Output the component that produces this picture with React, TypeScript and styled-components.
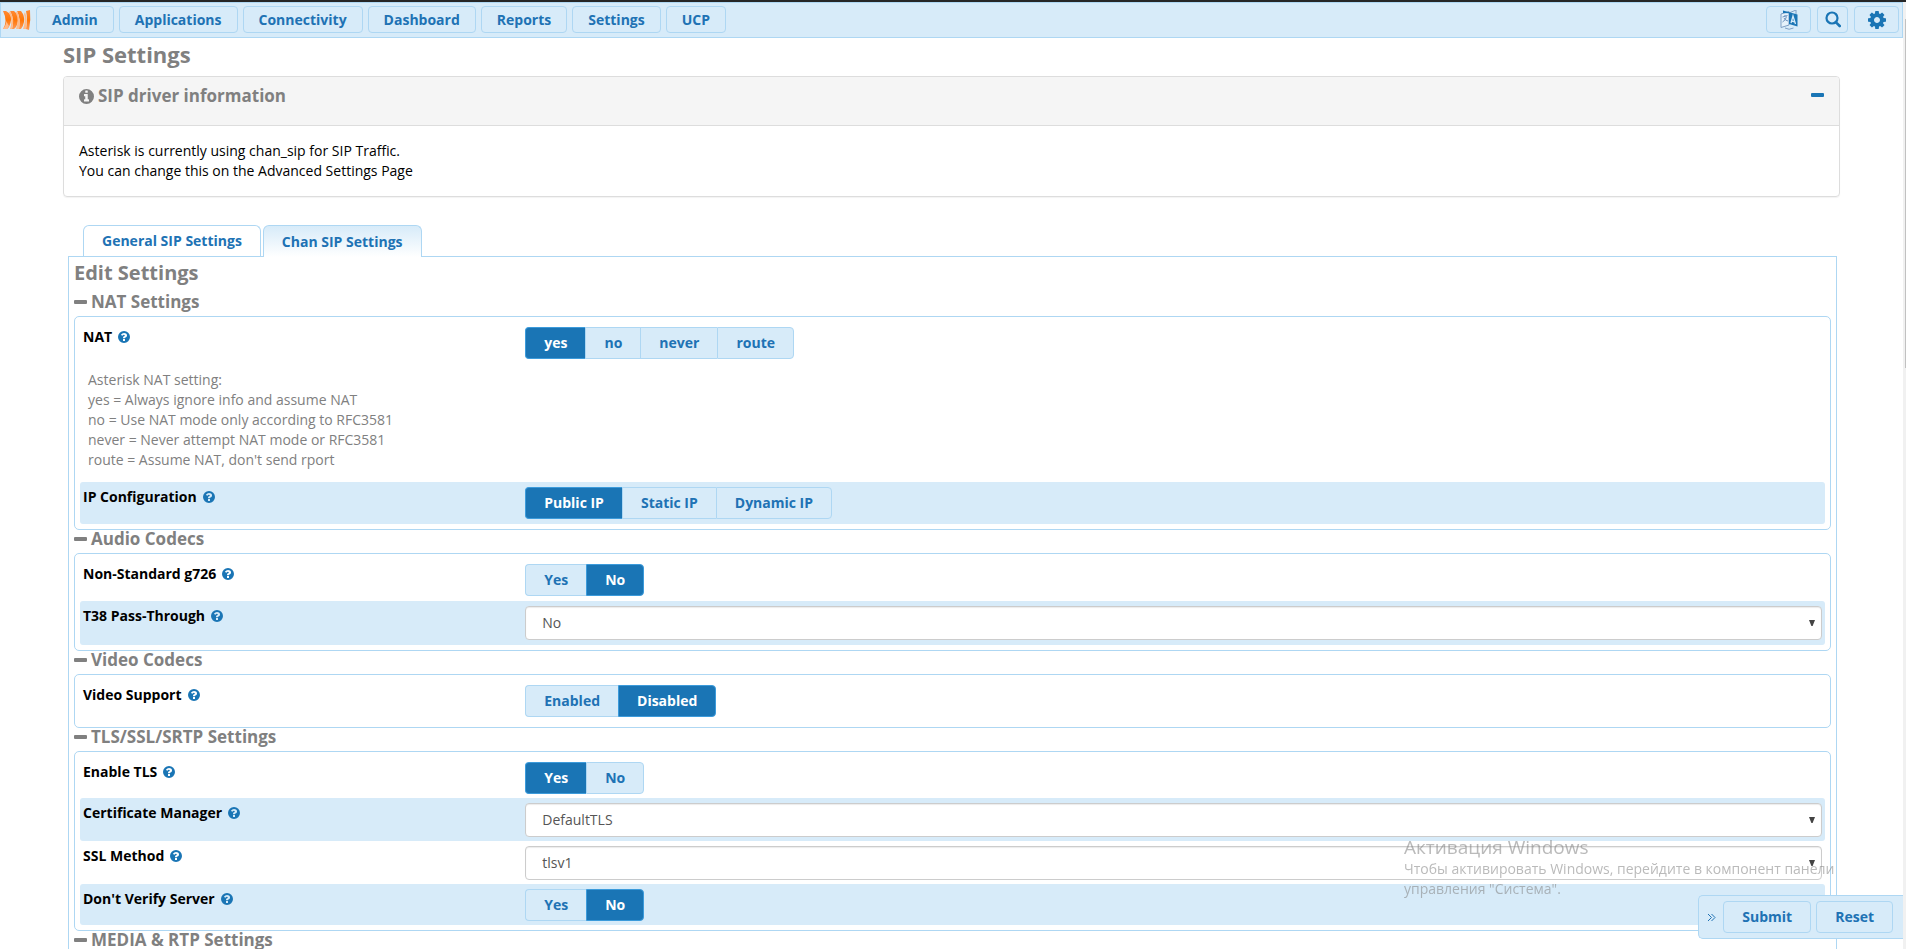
import React, { useId, useState } from "react";
import styled, { createGlobalStyle } from "styled-components";

const GlobalStyle = createGlobalStyle`
  *, *::before, *::after { box-sizing: border-box; }
  html, body { margin: 0; padding: 0; }
  html { overflow: hidden; height: 100%; }
  body {
    height: 100%;
    overflow: hidden;
    background: #fff;
    color: #000;
    font: 14px/20px "Open Sans", "Noto Sans", sans-serif;
  }
  button, select { font: inherit; margin: 0; }
  h1, h2, h3, p { margin: 0; }
`;

const Page = styled.div`
  border-top: 2px solid #262626;
  padding-right: 3px;
`;

const TopBar = styled.header`
  display: flex;
  justify-content: space-between;
  height: 36px;
  padding: 3px 3px 4px 1px;
  background: #d7ebf9;
  border: 1px solid #aed7f3;
`;

const NavGroup = styled.nav`
  display: flex;
  align-items: center;
  gap: 5px;
`;

const ToolGroup = styled.div`
  display: flex;
  gap: 6px;
`;

const Logo = styled.svg`
  width: 29px;
  height: 22px;
`;

const NavButton = styled.button`
  height: 27px;
  padding: 0 15px;
  border: 1px solid #aed7f3;
  border-radius: 4px;
  background: #d7ebf9;
  color: #2072b4;
  font-weight: 700;
  line-height: 20px;
`;

const ToolButton = styled.button<{ $w: number }>`
  display: flex;
  align-items: center;
  justify-content: center;
  width: ${(p) => p.$w}px;
  height: 27px;
  padding: 0;
  border: 1px solid #aed7f3;
  border-radius: 4px;
  background: #d7ebf9;
`;

const Main = styled.main`
  padding: 0 63px;
`;

const PageTitle = styled.h1`
  padding: 4px 0 10px;
  color: #808080;
  font-size: 22px;
  font-weight: 700;
  line-height: 24px;
`;

const InfoPanel = styled.section`
  border: 1px solid #ddd;
  border-radius: 4px;
  box-shadow: 0 1px 1px rgba(0, 0, 0, 0.05);
  overflow: hidden;
`;

const InfoHeader = styled.div`
  display: flex;
  justify-content: space-between;
  align-items: flex-start;
  height: 49px;
  padding: 9px 15px 0;
  background: #f5f5f5;
  border-bottom: 1px solid #ddd;
`;

const InfoTitle = styled.h2`
  display: flex;
  align-items: center;
  gap: 4px;
  color: #808080;
  font-size: 17px;
  font-weight: 700;
  line-height: 20px;
`;

const CollapseButton = styled.button`
  display: flex;
  padding: 7px 0;
  border: 0;
  background: none;
`;

const InfoBody = styled.div`
  padding: 15px;
`;

const TabList = styled.div`
  display: flex;
  gap: 2px;
  margin: 28px 20px 0;
`;

const Tab = styled.button<{ $active?: boolean }>`
  position: relative;
  height: ${(p) => (p.$active ? 32 : 31)}px;
  margin-bottom: ${(p) => (p.$active ? "-1px" : "0")};
  padding: 0 18px;
  border: 1px solid #aed7f3;
  border-bottom: 0;
  border-radius: 6px 6px 0 0;
  background: ${(p) => (p.$active ? "linear-gradient(#d7ebf9, #fff)" : "#fff")};
  color: #2072b4;
  font-weight: 700;
`;

const TabPanel = styled.div`
  margin: 0 3px 0 5px;
  padding: 0 5px;
  border: 1px solid #aed7f3;
`;

const PanelTitle = styled.h2`
  padding: 4px 0 8px;
  color: #808080;
  font-size: 20px;
  font-weight: 700;
  line-height: 24px;
`;

const SectionTitle = styled.h3`
  display: flex;
  align-items: center;
  gap: 4px;
  padding-bottom: 5px;
  color: #808080;
  font-size: 17px;
  font-weight: 700;
  line-height: 18px;
`;

const SectionBox = styled.div`
  padding: 5px;
  border: 1px solid #aed7f3;
  border-radius: 5px;
`;

const Row = styled.div<{ $shaded?: boolean; $tight?: boolean }>`
  display: grid;
  grid-template-columns: minmax(0, 1fr) minmax(0, 3fr);
  column-gap: 10px;
  padding: 5px 3px ${(p) => (p.$tight ? 4 : 5)}px;
  border-radius: 3px;
  background: ${(p) => (p.$shaded ? "#d7ebf9" : "transparent")};
`;

const RowLabel = styled.div`
  display: flex;
  align-items: center;
  gap: 6px;
  height: 20px;
  font-weight: 700;
`;

const HelpText = styled.p`
  padding: 6px 8px 12px;
  color: #808080;
`;

const ButtonGroup = styled.div`
  display: flex;
`;

const Choice = styled.button<{ $active: boolean }>`
  height: 32px;
  padding: 0 18px;
  border: 1px solid ${(p) => (p.$active ? "#3c9bdb" : "#aed7f3")};
  border-right-width: 0;
  background: ${(p) => (p.$active ? "#1a75b5" : "#d7ebf9")};
  color: ${(p) => (p.$active ? "#fff" : "#2072b4")};
  font-weight: 700;
  &:first-child { border-radius: 4px 0 0 4px; }
  &:last-child { border-right-width: 1px; border-radius: 0 4px 4px 0; }
`;

const SelectWrap = styled.div`
  position: relative;
`;

const SelectBox = styled.select`
  display: block;
  width: 100%;
  height: 34px;
  padding: 0 16px;
  border: 1px solid #ccc;
  border-radius: 4px;
  background: #fff;
  color: #555;
  box-shadow: inset 0 1px 1px rgba(0, 0, 0, 0.08);
  appearance: none;
`;

const SelectArrow = styled.svg`
  position: absolute;
  top: 14px;
  right: 7px;
  pointer-events: none;
`;

const ActionBar = styled.div`
  position: fixed;
  right: 3px;
  bottom: 10px;
  z-index: 3;
  display: flex;
  align-items: center;
  gap: 5px;
  height: 44px;
  padding: 0 10px 0 8px;
  border: 1px solid #aed7f3;
  border-right: 0;
  border-radius: 5px 0 0 5px;
  background: #d7ebf9;
`;

const HideButton = styled.button`
  display: flex;
  padding: 0 2px 0 0;
  border: 0;
  background: none;
`;

const ActionButton = styled.button`
  height: 32px;
  padding: 0 18px;
  border: 1px solid #aed7f3;
  border-radius: 4px;
  background: #d7ebf9;
  color: #2072b4;
  font-weight: 700;
`;

const Notice = styled.div`
  position: fixed;
  right: 62px;
  bottom: 50px;
  z-index: 2;
  width: 440px;
  color: rgba(130, 130, 130, 0.55);
  pointer-events: none;
`;

const NoticeTitle = styled.p`
  font-size: 19px;
  line-height: 24px;
`;

const NoticeText = styled.p`
  font-size: 14px;
  white-space: nowrap;
`;

const ScrollTrack = styled.div`
  position: fixed;
  top: 2px;
  right: 0;
  bottom: 0;
  width: 3px;
  padding: 17px 0 0 2px;
  background: #f1f1f1;
`;

const ScrollThumb = styled.div`
  height: 37.5%;
  background: #c1c1c1;
`;

function MinusIcon({ color }: { color: string }) {
  return (
    <svg width="13" height="4" aria-hidden="true">
      <rect width="13" height="4" rx="1" fill={color} />
    </svg>
  );
}

function HelpIcon() {
  return (
    <svg width="12" height="12" viewBox="0 0 1536 1536" aria-hidden="true">
      <path
        fill="#1a75b5"
        fillRule="evenodd"
        d="M768 0a768 768 0 1 0 0 1536a768 768 0 1 0 0-1536zM896 1248q0 14-9 23t-23 9h-192q-14 0-23-9t-9-23v-192q0-14 9-23t23-9h192q14 0 23 9t9 23v192zM1152 576q0 88-55.500 149t-139.500 108q-61 35-61 67 0 28-32 28h-192q-32 0-32-32v-36q0-100 110-175q60-34 88-56t28-61q0-36-35-62t-83-26q-50 0-85 26q-34 24-78 84-20 24-45 7l-131-100q-26-20-9-45q128-212 371-212 128 0 255 94t127 242z"
      />
    </svg>
  );
}

function InfoIcon() {
  return (
    <svg width="15" height="15" viewBox="0 0 1536 1536" aria-hidden="true">
      <path
        fill="#808080"
        fillRule="evenodd"
        d="M768 0a768 768 0 1 0 0 1536a768 768 0 1 0 0-1536zM1024 1248q0 32-32 32h-448q-32 0-32-32v-160q0-32 32-32h96v-320h-96q-32 0-32-32v-160q0-32 32-32h320q32 0 32 32v512h96q32 0 32 32v160zM896 352q0 32-32 32h-192q-32 0-32-32v-160q0-32 32-32h192q32 0 32 32v160z"
      />
    </svg>
  );
}

function LanguageIcon() {
  return (
    <svg width="18" height="20" viewBox="0 0 18 20" aria-hidden="true">
      <path d="M1 4L9 1.500V15L1 17.500z" fill="#e6f2fb" stroke="#7f9fc4" strokeWidth="1" />
      <path d="M9 3l7-3v4" fill="none" stroke="#7f9fc4" />
      <path d="M2.500 7l5-1.500M5 5v1.500M6.500 6.500Q6 10 2.500 12M4 8q1 2.500 4 3" fill="none" stroke="#6c92be" />
      <path d="M3 .5L17.500 4.500V16.500L9 14V3.200L3 3z" fill="#1a75b5" />
      <path d="M11 13l2-7 2.500 8M11.600 11l3 .8" fill="none" stroke="#d7ebf9" strokeWidth="1.300" />
      <path d="M5 18q4 2.500 8.500 0" fill="none" stroke="#7f9fc4" />
    </svg>
  );
}

function SearchIcon() {
  return (
    <svg width="16" height="17" viewBox="0 0 16 17" aria-hidden="true">
      <circle cx="7" cy="7" r="5.500" fill="none" stroke="#1a75b5" strokeWidth="2.200" />
      <path d="M11 11.300L14.700 15" stroke="#1a75b5" strokeWidth="2.600" strokeLinecap="round" />
    </svg>
  );
}

function GearIcon() {
  return (
    <svg width="18" height="18" viewBox="0 0 1536 1536" aria-hidden="true">
      <path
        fill="#1a75b5"
        d="M1024 768q0-106-75-181t-181-75-181 75-75 181 75 181 181 75 181-75 75-181zm512-109v222q0 12-8 23t-20 13l-185 28q-19 54-39 91 35 50 107 138 10 12 10 25t-9 23q-27 37-99 108t-94 71q-12 0-26-9l-138-108q-44 23-91 38-16 136-29 186-7 28-36 28h-222q-14 0-24.500-8.500t-11.500-21.500l-28-184q-49-16-90-37l-141 107q-10 9-25 9-14 0-25-11-126-114-165-168-7-10-7-23 0-12 8-23 15-21 51-66.500t54-70.500q-27-50-41-99l-183-27q-13-2-21-12.500t-8-23.500v-222q0-12 8-23t19-13l186-28q14-46 39-92-40-57-107-138-10-12-10-24 0-10 9-23 26-36 98.500-107.500t94.500-71.500q13 0 26 10l138 107q44-23 91-38 16-136 29-186 7-28 36-28h222q14 0 24.500 8.500t11.500 21.500l28 184q49 16 90 37l142-107q9-9 24-9 13 0 25 10 129 119 165 170 7 8 7 22 0 12-8 23-15 21-51 66.500t-54 70.500q26 50 41 98l183 28q13 2 21 12.500t8 23.500z"
      />
    </svg>
  );
}

function BrandLogo() {
  const bars = [
    { front: "M1 2H4Q10 5 9 11Q8 18 5 20H1Q6 12 1 2z", fold: "M1 20Q5 15 4 12L7 17L5 20z" },
    { front: "M8 2H12Q17 6 16 12Q15 18 12 20H10Q13 10 8 2z", fold: "M8 2Q13 10 10 20H8Q11 11 7 4z" },
    { front: "M15 2H19Q23 7 22 13Q21 18 19 20H17Q19 10 15 2z", fold: "M15 2Q19 10 17 20H14Q17 11 14 4z" },
    { front: "M24 2L28 1Q29 11 27 21L24 20Q26 10 24 2z", fold: "M23 3Q26 11 24 20H21Q24 11 22 5z" },
  ];
  return (
    <Logo viewBox="0 0 29 22" role="img" aria-label="FreePBX">
      <defs>
        <linearGradient id="brand" x1="0" y1="0" x2="0" y2="1">
          <stop offset="0" stopColor="#ff8a35" />
          <stop offset="0.500" stopColor="#ff7606" />
          <stop offset="1" stopColor="#ff9a55" />
        </linearGradient>
      </defs>
      {bars.map((b) => (
        <g key={b.front}>
          <path d={b.front} fill="url(#brand)" />
          <path d={b.fold} fill="#ffbb8a" />
        </g>
      ))}
    </Logo>
  );
}

type Field = {
  label: string;
  options: string[];
  value: string;
  kind?: "select";
  help?: string[];
};

const sections: { title: string; tight?: boolean; fields: Field[] }[] = [
  {
    title: "NAT Settings",
    fields: [
      {
        label: "NAT",
        options: ["yes", "no", "never", "route"],
        value: "yes",
        help: [
          "Asterisk NAT setting:",
          "yes = Always ignore info and assume NAT",
          "no = Use NAT mode only according to RFC3581",
          "never = Never attempt NAT mode or RFC3581",
          "route = Assume NAT, don't send rport",
        ],
      },
      { label: "IP Configuration", options: ["Public IP", "Static IP", "Dynamic IP"], value: "Public IP" },
    ],
  },
  {
    title: "Audio Codecs",
    fields: [
      { label: "Non-Standard g726", options: ["Yes", "No"], value: "No" },
      { label: "T38 Pass-Through", options: ["No", "Yes"], value: "No", kind: "select" },
    ],
  },
  {
    title: "Video Codecs",
    fields: [{ label: "Video Support", options: ["Enabled", "Disabled"], value: "Disabled" }],
  },
  {
    title: "TLS/SSL/SRTP Settings",
    tight: true,
    fields: [
      { label: "Enable TLS", options: ["Yes", "No"], value: "Yes" },
      { label: "Certificate Manager", options: ["DefaultTLS"], value: "DefaultTLS", kind: "select" },
      { label: "SSL Method", options: ["tlsv1", "sslv2", "sslv3"], value: "tlsv1", kind: "select" },
      { label: "Don't Verify Server", options: ["Yes", "No"], value: "No" },
    ],
  },
];

function SettingRow({ field, shaded, tight }: { field: Field; shaded: boolean; tight?: boolean }) {
  const id = useId();
  const [value, setValue] = useState(field.value);
  return (
    <>
      <Row $shaded={shaded} $tight={tight}>
        <RowLabel>
          {field.kind === "select" ? (
            <label htmlFor={id}>{field.label}</label>
          ) : (
            <span id={`${id}-label`}>{field.label}</span>
          )}
          <HelpIcon />
        </RowLabel>
        {field.kind === "select" ? (
          <SelectWrap>
            <SelectBox id={id} value={value} onChange={(e) => setValue(e.target.value)}>
              {field.options.map((o) => (
                <option key={o}>{o}</option>
              ))}
            </SelectBox>
            <SelectArrow width="6" height="6" aria-hidden="true">
              <path d="M0 0H6L3.600 6H2.400z" fill="#444" />
            </SelectArrow>
          </SelectWrap>
        ) : (
          <ButtonGroup role="group" aria-labelledby={`${id}-label`}>
            {field.options.map((o) => (
              <Choice key={o} type="button" $active={o === value} aria-pressed={o === value} onClick={() => setValue(o)}>
                {o}
              </Choice>
            ))}
          </ButtonGroup>
        )}
      </Row>
      {field.help && (
        <HelpText>
          {field.help.map((line) => (
            <React.Fragment key={line}>
              {line}
              <br />
            </React.Fragment>
          ))}
        </HelpText>
      )}
    </>
  );
}

export default function App() {
  const menu = ["Admin", "Applications", "Connectivity", "Dashboard", "Reports", "Settings", "UCP"];
  return (
    <>
      <GlobalStyle />
      <Page>
        <TopBar>
          <NavGroup>
            <BrandLogo />
            {menu.map((m) => (
              <NavButton key={m} type="button">
                {m}
              </NavButton>
            ))}
          </NavGroup>
          <ToolGroup>
            <ToolButton $w={45} type="button" aria-label="Language">
              <LanguageIcon />
            </ToolButton>
            <ToolButton $w={31} type="button" aria-label="Search">
              <SearchIcon />
            </ToolButton>
            <ToolButton $w={45} type="button" aria-label="Options">
              <GearIcon />
            </ToolButton>
          </ToolGroup>
        </TopBar>
        <Main>
          <PageTitle>SIP Settings</PageTitle>
          <InfoPanel>
            <InfoHeader>
              <InfoTitle>
                <InfoIcon />
                SIP driver information
              </InfoTitle>
              <CollapseButton type="button" aria-label="Collapse">
                <MinusIcon color="#1a75b5" />
              </CollapseButton>
            </InfoHeader>
            <InfoBody>
              <p>Asterisk is currently using chan_sip for SIP Traffic.</p>
              <p>You can change this on the Advanced Settings Page</p>
            </InfoBody>
          </InfoPanel>
          <TabList role="tablist">
            <Tab type="button" role="tab" aria-selected={false}>
              General SIP Settings
            </Tab>
            <Tab type="button" role="tab" aria-selected $active>
              Chan SIP Settings
            </Tab>
          </TabList>
          <TabPanel role="tabpanel">
            <PanelTitle>Edit Settings</PanelTitle>
            {sections.map((s) => (
              <section key={s.title}>
                <SectionTitle>
                  <MinusIcon color="#808080" />
                  {s.title}
                </SectionTitle>
                <SectionBox>
                  {s.fields.map((f, i) => (
                    <SettingRow key={f.label} field={f} shaded={i % 2 === 1} tight={s.tight} />
                  ))}
                </SectionBox>
              </section>
            ))}
            <SectionTitle>
              <MinusIcon color="#808080" />
              MEDIA &amp; RTP Settings
            </SectionTitle>
          </TabPanel>
        </Main>
      </Page>
      <Notice>
        <NoticeTitle>Активация Windows</NoticeTitle>
        <NoticeText>
          Чтобы активировать Windows, перейдите в компонент панели
          <br />
          управления "Система".
        </NoticeText>
      </Notice>
      <ActionBar>
        <HideButton type="button" aria-label="Hide actions">
          <svg width="9" height="9" viewBox="0 0 9 9" fill="none" stroke="#2072b4" aria-hidden="true">
            <path d="M1 1l3.500 3.500L1 8M4.500 1L8 4.500L4.500 8" />
          </svg>
        </HideButton>
        <ActionButton type="submit">Submit</ActionButton>
        <ActionButton type="reset">Reset</ActionButton>
      </ActionBar>
      <ScrollTrack>
        <ScrollThumb />
      </ScrollTrack>
    </>
  );
}
